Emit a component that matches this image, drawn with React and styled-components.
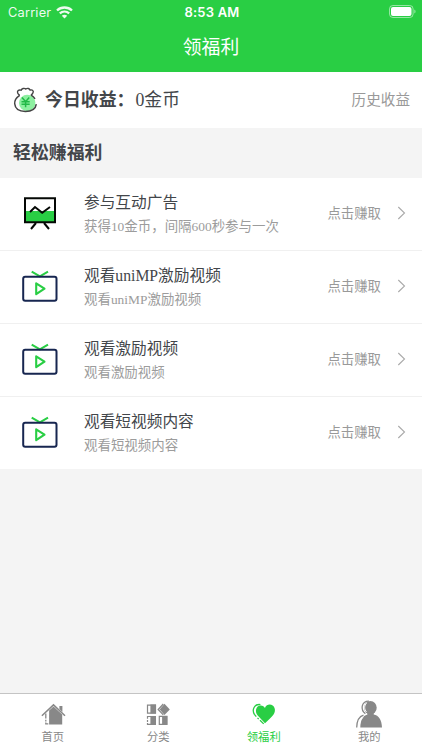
import React from "react";
import styled, { createGlobalStyle } from "styled-components";

const GlobalStyle = createGlobalStyle`
  * {
    box-sizing: border-box;
  }
  body {
    margin: 0;
    background: #f4f4f4;
    color: #43464a;
    font-family: "Liberation Serif", "Noto Sans CJK SC", sans-serif;
  }
  svg {
    display: block;
    flex: none;
  }
`;

const Screen = styled.div`
  display: flex;
  flex-direction: column;
  width: 422px;
  height: 750px;
  overflow: hidden;
`;

const Header = styled.header`
  height: 72px;
  background: #29ce44;
  color: #fff;
`;

const StatusBar = styled.div`
  display: grid;
  grid-template-columns: 1fr auto 1fr;
  align-items: center;
  height: 24px;
  padding: 0 6px 0 8px;
  font-family: Inter, "Liberation Sans", sans-serif;
  font-size: 12.8px;
`;

const Carrier = styled.div`
  display: flex;
  align-items: center;
  gap: 5px;
  letter-spacing: 0.2px;
  opacity: 0.92;
`;

const Time = styled.div`
  font-weight: 600;
  font-size: 13px;
  letter-spacing: 0.2px;
`;

const BatterySlot = styled.div`
  display: flex;
  justify-content: flex-end;
  padding-bottom: 1px;
`;

const PageTitle = styled.h1`
  margin: 0;
  height: 47px;
  line-height: 48px;
  text-align: center;
  font-size: 18.8px;
  font-weight: 400;
`;

const Earnings = styled.section`
  display: flex;
  align-items: center;
  height: 56px;
  padding: 0 12px 0 13px;
  background: #fff;
  line-height: 56px;
`;

const EarningsLabel = styled.strong`
  margin-left: 7px;
  font-size: 17.9px;
`;

const Coins = styled.span`
  flex: 1;
  margin-left: 1px;
  font-size: 17.8px;
`;

const History = styled.span`
  color: #999;
  font-size: 14.6px;
`;

const SectionTitle = styled.h2`
  margin: 0;
  height: 50px;
  padding-left: 13px;
  line-height: 50px;
  font-size: 17.9px;
`;

const TaskList = styled.main`
  flex: 1;
`;

const Task = styled.div`
  display: flex;
  align-items: center;
  height: ${p => (p.$last ? "72px" : "73px")};
  padding: 0 16px 0 20px;
  background: #fff;
  border-bottom: ${p => (p.$last ? "none" : "1px solid #f0f0f0")};
`;

const TaskIcon = styled.div`
  padding-bottom: 3px;
`;

const TaskText = styled.div`
  flex: 1;
  margin-left: 24px;
`;

const TaskName = styled.div`
  height: 24px;
  line-height: 26px;
  font-size: 15.7px;
`;

const TaskNote = styled.div`
  height: 25px;
  line-height: 25px;
  font-size: 13.45px;
  color: #9c9c9c;
`;

const TaskAction = styled.span`
  margin-right: 16px;
  padding-bottom: 4px;
  font-size: 13.4px;
  color: #999;
`;

const ArrowSlot = styled.span`
  padding-bottom: 2px;
`;

const TabBar = styled.nav`
  display: grid;
  grid-template-columns: repeat(4, 1fr);
  height: 57px;
  background: #fff;
  border-top: 1px solid #c4c4c4;
`;

const Tab = styled.div`
  display: flex;
  flex-direction: column;
  align-items: center;
  padding-top: 6px;
  font-size: 11.3px;
  line-height: 18px;
  color: ${p => (p.$active ? "#29ce44" : "#888")};
`;

const WifiIcon = () => (
  <svg width="17" height="13" viewBox="0 0 17 13" fill="none" stroke="#fff" strokeWidth="2.3">
    <path d="M1 4.5C5.2.5 11.8.5 16 4.5" />
    <path d="M3.8 7.4c2.7-2.4 6.7-2.4 9.4 0" />
    <path d="M8.5 12.5 5.8 9.8c1.5-1.4 3.9-1.4 5.4 0Z" fill="#fff" stroke="none" />
  </svg>
);

const BatteryIcon = () => (
  <svg width="27" height="13" viewBox="0 0 27 13">
    <rect x=".5" y=".5" width="23.6" height="12" rx="3.4" fill="none" stroke="#fff" strokeOpacity=".5" />
    <rect x="2" y="2" width="20.5" height="9" rx="2" fill="#fff" />
    <path d="M25.3 4.5c1.7.8 1.7 3.2 0 4Z" fill="#fff" fillOpacity=".5" />
  </svg>
);

const MoneyBagIcon = () => (
  <svg width="25" height="29" viewBox="0 0 25 29" fill="none">
    <circle cx="14.2" cy="17" r="8.2" fill="#8df0a0" />
    <path
      d="M6.7 9.3C4.4 7.8 3.9 5.8 5.2 4.6c1-.9 2.4-.5 2.9-.4C8.8 2.5 11.3 1.7 12.8 3c1.8-1.2 3.7-.4 4.3 1.1 2.4-.8 4 1.2 2.7 3.1-.6 1-1.4 1.6-1.7 2.2"
      stroke="#444"
      strokeWidth="1.4"
    />
    <path
      d="M6.7 9.3C3.2 11.6 1.4 14.5 1.7 17.8c.4 4.7 4.3 7.7 10.7 7.7s10.3-2.9 10.9-7.3M18 9.2c1.7.9 3 2 4 3.7"
      stroke="#444"
      strokeWidth="1.5"
    />
    <path d="m9 11.5 3.6 4.2 3.6-4.2M8.5 15.7h8.2M8.5 18.3h8.2M12.6 15.7v5.5" stroke="#22b947" strokeWidth="1.5" />
  </svg>
);

const BoardIcon = () => (
  <svg width="40" height="40" viewBox="0 0 40 40" fill="none" stroke="#050805" strokeWidth="2">
    <path d="M5 18h30v11H5z" fill="#29ce44" stroke="none" />
    <path d="M5 5.2h30v24.1H5z" />
    <path d="m10 19 5-5 7.2 5.7L30 14M16 30l-5 6M24 30l5 6" />
  </svg>
);

const TvIcon = () => (
  <svg width="40" height="40" viewBox="0 0 40 40" fill="none" stroke="#29ce44" strokeWidth="2.1">
    <path d="m11.7 5.7 8.2 4.6L28 5.7" />
    <rect x="3.2" y="10.7" width="33.3" height="24" rx="2" stroke="#172650" strokeWidth="2" />
    <path d="m16.2 17.3 8.3 5.3-8.3 5.6Z" strokeLinejoin="round" />
  </svg>
);

const ArrowIcon = () => (
  <svg width="9" height="14" viewBox="0 0 9 14" fill="none" stroke="#aaa" strokeWidth="1.1">
    <path d="m1.3 1 6.2 6-6.2 6" />
  </svg>
);

const HomeIcon = () => (
  <svg width="30" height="28" viewBox="0 0 30 28" fill="none" stroke="currentColor">
    <path d="M3.9 15.8 15.5 4.9 27 15.8" strokeWidth="1.5" />
    <path d="M21.4 6h3v6l-3-3z" fill="currentColor" stroke="none" />
    <path d="m15.5 6.6 8.7 8v9.8H11.1V10.6z" fill="currentColor" stroke="none" />
    <path d="M7.8 13.5v5m0 1.3v1.8m0 1v1.2h2.5" strokeWidth="1.3" />
  </svg>
);

const CategoryIcon = () => (
  <svg width="30" height="28" viewBox="0 0 30 28" fill="none" stroke="currentColor" strokeWidth="1.2">
    <path d="M4.5 5.1h8v8h-8zM16.3 16.4h7.6v8h-7.6z" />
    <path d="M7.4 4.6H13v9H7.4zM19.1 16h5.2v8.8h-5.2zM7.4 16H13v8.9H7.4z" fill="currentColor" stroke="none" />
    <path d="M8 16.5H4.5v2.2m0 1.4v1.8m0 1v1.5H8" />
    <path d="m20.3 4-5.1 5.5 5.1 5.4" strokeWidth="1.3" />
    <path d="m21.5 3.8 5.3 5.7-5.3 5.5-4.8-5.5z" fill="currentColor" stroke="none" />
  </svg>
);

const HeartIcon = () => (
  <svg width="30" height="28" viewBox="0 0 30 28" fill="none">
    <path
      d="M16 23.3 8.7 15.5C5.5 11.8 6.8 5.4 11.7 5.4c2.1 0 3.5 1.1 4.2 2.5C17 5.7 18.7 4.6 20.6 4.6c4.8 0 7.1 5.9 3.8 10.1-1.8 2.3-5.8 6.2-8.4 8.6Z"
      fill="currentColor"
    />
    <path d="M11.4 4.6C4.7 3.8 2.9 10.3 5.4 14.4l1.9 2.3m1.2 1.2 1.2 1.2m1.3 1.1 3.7 3.7" stroke="currentColor" strokeWidth="1.3" />
  </svg>
);

const UserIcon = () => (
  <svg width="30" height="28" viewBox="0 0 30 28" fill="none">
    <ellipse cx="16.4" cy="7.8" rx="6.3" ry="6.8" fill="currentColor" />
    <path
      d="M13.4 12h6.3v2.4c5.1 1 8 5.1 8.3 13.2H6.3c.2-7.6 2.3-11.8 7.1-13.2Z"
      fill="currentColor"
    />
    <path
      d="M14.9 1.1C6.8 1.2 6.4 10.1 11.4 13.6M9.5 15.2C5 16.5 2.9 20.5 2.7 27.5"
      stroke="currentColor"
      strokeWidth="1.3"
    />
    <path d="M12.6 3.2c-2.5 2.1-2.5 6.4-.1 8.7M9.3 17.2c-2.5 1.7-3.8 4.7-4.1 10.3" stroke="#fff" strokeWidth="1" />
  </svg>
);

const tasks = [
  { name: "参与互动广告", note: "获得10金币，间隔600秒参与一次", icon: BoardIcon },
  { name: "观看uniMP激励视频", note: "观看uniMP激励视频", icon: TvIcon },
  { name: "观看激励视频", note: "观看激励视频", icon: TvIcon },
  { name: "观看短视频内容", note: "观看短视频内容", icon: TvIcon }
];

const tabs = [
  { label: "首页", icon: HomeIcon },
  { label: "分类", icon: CategoryIcon },
  { label: "领福利", icon: HeartIcon, active: true },
  { label: "我的", icon: UserIcon }
];

export default function App() {
  return (
    <Screen>
      <GlobalStyle />
      <Header>
        <StatusBar>
          <Carrier>
            Carrier
            <WifiIcon />
          </Carrier>
          <Time>8:53 AM</Time>
          <BatterySlot>
            <BatteryIcon />
          </BatterySlot>
        </StatusBar>
        <PageTitle>领福利</PageTitle>
      </Header>
      <Earnings>
        <MoneyBagIcon />
        <EarningsLabel>今日收益：</EarningsLabel>
        <Coins>0金币</Coins>
        <History>历史收益</History>
      </Earnings>
      <SectionTitle>轻松赚福利</SectionTitle>
      <TaskList>
        {tasks.map(({ name, note, icon: Icon }, i) => (
          <Task key={name} $last={i === tasks.length - 1}>
            <TaskIcon>
              <Icon />
            </TaskIcon>
            <TaskText>
              <TaskName>{name}</TaskName>
              <TaskNote>{note}</TaskNote>
            </TaskText>
            <TaskAction>点击赚取</TaskAction>
            <ArrowSlot>
              <ArrowIcon />
            </ArrowSlot>
          </Task>
        ))}
      </TaskList>
      <TabBar>
        {tabs.map(({ label, icon: Icon, active }) => (
          <Tab key={label} $active={active}>
            <Icon />
            {label}
          </Tab>
        ))}
      </TabBar>
    </Screen>
  );
}
